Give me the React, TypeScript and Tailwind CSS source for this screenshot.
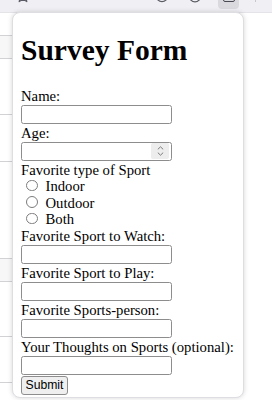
import React from "react";

const Label = ({ children }: { children: React.ReactNode }) => (
  <div className="h-[16.5px] leading-[16.5px] whitespace-nowrap">{children}</div>
);

const TextField = () => (
  <div className="h-[20.5px] pt-[0.5px]">
    <input
      type="text"
      className="block w-[151px] h-[19px] border border-[#8d8d8d] rounded-[2.5px] bg-white outline-none"
    />
  </div>
);

const NumberField = () => (
  <div className="h-[20.5px] pt-[0.5px]">
    <div className="flex items-center w-[151px] h-[19px] border border-[#8d8d8d] rounded-[2.5px] bg-white">
      <input type="text" className="flex-1 min-w-0 h-full bg-transparent outline-none" />
      <div className="flex flex-col items-center justify-center gap-[2px] w-[18px] h-[16px] mr-[2px] rounded-[2px] bg-[#ededed]">
        <svg width="7" height="4" viewBox="0 0 7 4" fill="none">
          <path d="M0.8 3.4 3.5 0.8 6.2 3.4" stroke="#7a7a7a" strokeWidth="1" />
        </svg>
        <svg width="7" height="4" viewBox="0 0 7 4" fill="none">
          <path d="M0.8 0.6 3.5 3.2 6.2 0.6" stroke="#7a7a7a" strokeWidth="1" />
        </svg>
      </div>
    </div>
  </div>
);

const Radio = ({ label }: { label: string }) => (
  <div className="h-[16.5px] leading-[16.5px] whitespace-nowrap">
    <span className="inline-block align-baseline ml-[5px] mr-[8px] w-[11.5px] h-[11.5px] rounded-full border border-[#7c7c7c] bg-white" />
    {label}
  </div>
);

const PAGE_ROWS = [
  { h: "h-[23px]", bg: "bg-white" },
  { h: "h-[23px]", bg: "bg-[#f7f7f8]" },
  { h: "h-[56px]", bg: "bg-white" },
  { h: "h-[47px]", bg: "bg-white" },
  { h: "h-[97px]", bg: "bg-white" },
  { h: "h-[23px]", bg: "bg-[#f7f7f8]" },
  { h: "h-[55px]", bg: "bg-white" },
  { h: "h-[46px]", bg: "bg-white" },
];

export default function App() {
  return (
    <div className="relative w-[272px] h-[400px] overflow-hidden bg-white font-['Liberation_Serif',serif] text-black">
      {/* browser toolbar, only its lower edge shows */}
      <div className="flex items-end h-[13px] bg-[#f0f0f4] border-b border-[#e3e3e8] overflow-hidden">
        <svg className="ml-[16px] mb-[9px] shrink-0" width="14" height="14" viewBox="0 0 14 14" fill="none">
          <path d="M7 1 8.8 5 13 5.4 9.8 8.2 10.8 12.6 7 10.3 3.2 12.6 4.2 8.2 1 5.4 5.2 5Z" stroke="#5b5b66" strokeWidth="1.2" strokeLinejoin="round" />
        </svg>
        <svg className="ml-[125px] mb-[9px] shrink-0" width="14" height="14" viewBox="0 0 14 14" fill="none">
          <circle cx="7" cy="7" r="5.6" stroke="#5b5b66" strokeWidth="1.2" />
        </svg>
        <svg className="ml-[19px] mb-[9px] shrink-0" width="14" height="14" viewBox="0 0 14 14" fill="none">
          <circle cx="7" cy="7" r="5.8" stroke="#5b5b66" strokeWidth="1.2" />
        </svg>
        <div className="flex justify-center items-end ml-[16px] mb-[3px] w-[21px] h-[20px] shrink-0 rounded-[4px] bg-[#d9d9de]">
          <div className="mb-[7px] w-[12px] h-[10px] rounded-[2px] border-[1.3px] border-[#4a4a55]" />
        </div>
        <div className="ml-[16px] mb-[10px] w-[1px] h-[8px] shrink-0 bg-[#c8c8cf]" />
      </div>

      {/* page behind the popup: list rows on the left, blank on the right */}
      <div className="flex">
        <div className="flex flex-col w-[14px]">
          {PAGE_ROWS.map((r, i) => (
            <div key={i} className={`${r.h} ${r.bg} border-b border-[#d2d2d6]`} />
          ))}
        </div>
        <div className="flex-1 bg-white" />
      </div>

      {/* extension popup */}
      <div className="absolute left-[12px] top-[12px] w-[232px] h-[386px] overflow-hidden bg-white border border-[#dddde2] rounded-[8px] shadow-[0_0_5px_rgba(0,0,0,0.16)]">
        <div className="pl-[8px] pt-[20px] text-[14.7px]">
          <h1 className="h-[34px] leading-[34px] text-[29.5px] font-bold whitespace-nowrap">Survey Form</h1>
          <div className="mt-[20.5px]">
            <Label>Name:</Label>
            <TextField />
            <Label>Age:</Label>
            <NumberField />
            <Label>Favorite type of Sport</Label>
            <Radio label="Indoor" />
            <Radio label="Outdoor" />
            <Radio label="Both" />
            <Label>Favorite Sport to Watch:</Label>
            <TextField />
            <Label>Favorite Sport to Play:</Label>
            <TextField />
            <Label>Favorite Sports-person:</Label>
            <TextField />
            <Label>Your Thoughts on Sports (optional):</Label>
            <TextField />
            <button
              type="button"
              className="block w-[47px] h-[19px] border border-[#8d8d8d] rounded-[3px] bg-[#efefef] font-['Liberation_Sans',sans-serif] text-[12.2px] leading-none text-black"
            >
              Submit
            </button>
          </div>
        </div>
      </div>
    </div>
  );
}
